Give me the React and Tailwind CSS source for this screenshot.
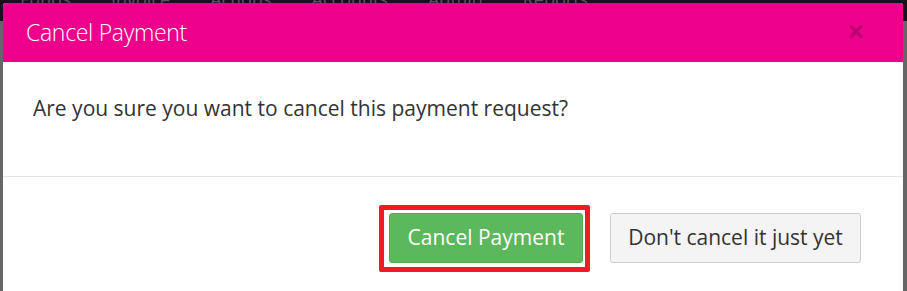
import React from 'react';

const font = { fontFamily: '"Open Sans", "Liberation Sans", sans-serif' };

export default function App() {
  return (
    <div className="relative w-[907px] h-[291px] overflow-hidden bg-[#666666]" style={font}>
      {/* dimmed navbar behind the backdrop */}
      <div className="absolute left-0 top-0 w-full h-[35px] bg-[#16121d] flex gap-[40px] pl-[20px] -mt-[14px] text-[18px] text-[#5a5660]">
        <span>Funds</span>
        <span>Invoice</span>
        <span>Actions</span>
        <span>Accounts</span>
        <span>Admin</span>
        <span>Reports</span>
      </div>

      <div className="absolute left-[3px] top-[3px] w-[900px] h-[300px] bg-white rounded-t-[3px] overflow-hidden">
        <div className="h-[59px] bg-[#ec008c] flex items-center justify-between pl-[23px] pr-[38px]">
          <h4 className="text-[23px] font-light text-white tracking-[-0.3px]">Cancel Payment</h4>
          <span className="text-[32px] font-bold leading-none text-black/20 -mt-[4px]">×</span>
        </div>

        <div className="h-[114px] pl-[30px] pt-[31px]">
          <p className="text-[21px] leading-[30px] text-[#333333]">
            Are you sure you want to cancel this payment request?
          </p>
        </div>

        <div className="h-px bg-[#e5e5e5]" />

        <div className="flex justify-end items-start pt-[28px] pr-[42px] gap-[20px]">
          <div className="border-[5px] border-[#ed1c24] rounded-[2px] pl-[5px] pr-[2px] pt-[3px] pb-[4px]">
            <button className="w-[194px] h-[50px] bg-[#5cb85c] border border-[#4cae4c] rounded-[3px] text-white text-[21px]">
              Cancel Payment
            </button>
          </div>
          <button className="mt-[8px] w-[251px] h-[50px] bg-[#f4f4f4] border border-[#cccccc] rounded-[3px] text-[#333333] text-[21px]">
            Don't cancel it just yet
          </button>
        </div>
      </div>
    </div>
  );
}
